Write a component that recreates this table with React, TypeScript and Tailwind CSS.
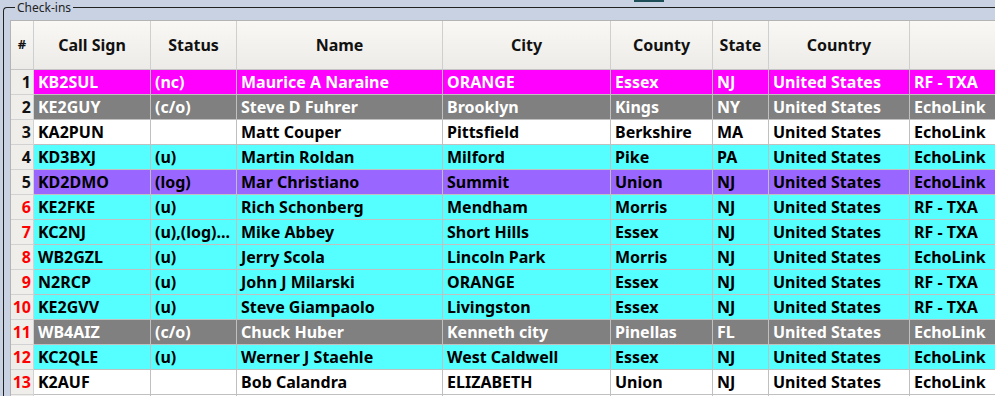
const COLS = [
  { key: "call", label: "Call Sign", w: "w-[117px]" },
  { key: "status", label: "Status", w: "w-[86px]" },
  { key: "name", label: "Name", w: "w-[206px]" },
  { key: "city", label: "City", w: "w-[168px]" },
  { key: "county", label: "County", w: "w-[102px]" },
  { key: "state", label: "State", w: "w-[56px]" },
  { key: "country", label: "Country", w: "w-[141px]" },
  { key: "mode", label: "", w: "w-[120px]" },
] as const;

type Fila = {
  call: string;
  status: string;
  name: string;
  city: string;
  county: string;
  state: string;
  country: string;
  mode: string;
  tipo: "nc" | "co" | "none" | "u" | "log";
};

const ESTILO: Record<Fila["tipo"], string> = {
  nc: "bg-[#ff00ff] text-white",
  co: "bg-[#808080] text-white",
  none: "bg-white text-black",
  u: "bg-[#55ffff] text-black",
  log: "bg-[#9966ff] text-black",
};

const FILAS: Fila[] = [
  { call: "KB2SUL", status: "(nc)", name: "Maurice A Naraine", city: "ORANGE", county: "Essex", state: "NJ", country: "United States", mode: "RF - TXA", tipo: "nc" },
  { call: "KE2GUY", status: "(c/o)", name: "Steve D Fuhrer", city: "Brooklyn", county: "Kings", state: "NY", country: "United States", mode: "EchoLink", tipo: "co" },
  { call: "KA2PUN", status: "", name: "Matt Couper", city: "Pittsfield", county: "Berkshire", state: "MA", country: "United States", mode: "EchoLink", tipo: "none" },
  { call: "KD3BXJ", status: "(u)", name: "Martin Roldan", city: "Milford", county: "Pike", state: "PA", country: "United States", mode: "EchoLink", tipo: "u" },
  { call: "KD2DMO", status: "(log)", name: "Mar Christiano", city: "Summit", county: "Union", state: "NJ", country: "United States", mode: "EchoLink", tipo: "log" },
  { call: "KE2FKE", status: "(u)", name: "Rich Schonberg", city: "Mendham", county: "Morris", state: "NJ", country: "United States", mode: "RF - TXA", tipo: "u" },
  { call: "KC2NJ", status: "(u),(log)...", name: "Mike Abbey", city: "Short Hills", county: "Essex", state: "NJ", country: "United States", mode: "RF - TXA", tipo: "u" },
  { call: "WB2GZL", status: "(u)", name: "Jerry Scola", city: "Lincoln Park", county: "Morris", state: "NJ", country: "United States", mode: "EchoLink", tipo: "u" },
  { call: "N2RCP", status: "(u)", name: "John J Milarski", city: "ORANGE", county: "Essex", state: "NJ", country: "United States", mode: "RF - TXA", tipo: "u" },
  { call: "KE2GVV", status: "(u)", name: "Steve Giampaolo", city: "Livingston", county: "Essex", state: "NJ", country: "United States", mode: "RF - TXA", tipo: "u" },
  { call: "WB4AIZ", status: "(c/o)", name: "Chuck Huber", city: "Kenneth city", county: "Pinellas", state: "FL", country: "United States", mode: "EchoLink", tipo: "co" },
  { call: "KC2QLE", status: "(u)", name: "Werner J Staehle", city: "West Caldwell", county: "Essex", state: "NJ", country: "United States", mode: "EchoLink", tipo: "u" },
  { call: "K2AUF", status: "", name: "Bob Calandra", city: "ELIZABETH", county: "Union", state: "NJ", country: "United States", mode: "EchoLink", tipo: "none" },
];

export default function App() {
  return (
    <div className="relative w-[995px] h-[396px] overflow-hidden bg-[#c9d2e3] font-['Noto_Sans',sans-serif] pt-[7px] pl-[3px]">
      <div className="absolute left-[634px] top-0 w-[30px] h-[2px] bg-[#1d4d57]" />
      <div className="relative border-t border-l border-[#222] rounded-tl-[4px] pt-[12px] pl-[6px]">
        <span className="absolute left-[11px] top-[-8px] bg-[#c9d2e3] px-[2px] text-[12px] leading-[16px] text-[#222]">
          Check-ins
        </span>
        <div className="border-l border-t border-[#b4b4b4] w-[1200px]">
          {/* encabezado */}
          <div className="flex h-[49px] border-b border-[#c4c4c4] bg-linear-to-b from-[#faf8f5] to-[#edebe7]">
            <div className="w-[23px] shrink-0 border-r border-[#cfcfcf] flex items-center justify-center text-[13px] font-bold text-[#111]">
              #
            </div>
            {COLS.map((c) => (
              <div
                key={c.key}
                className={`${c.w} shrink-0 border-r border-[#cfcfcf] flex items-center justify-center text-[16px] font-bold text-[#111]`}
              >
                {c.label}
              </div>
            ))}
          </div>
          {FILAS.map((f, i) => (
            <div key={i} className="flex h-[25px]">
              <div
                className={`w-[23px] shrink-0 border-r border-b border-[#d2d2d2] bg-[#efeeeb] flex items-center justify-end pr-[2px] text-[16px] font-bold ${
                  i >= 5 ? "text-[#ff0000]" : "text-[#111]"
                }`}
              >
                {i + 1}
              </div>
              {COLS.map((c) => (
                <div
                  key={c.key}
                  className={`${c.w} ${ESTILO[f.tipo]} shrink-0 border-r border-b border-[#c0c0c0] flex items-center px-[4px] text-[16px] font-bold whitespace-nowrap overflow-hidden`}
                >
                  {f[c.key]}
                </div>
              ))}
            </div>
          ))}
          {/* fila siguiente, apenas visible */}
          <div className="flex h-[25px]">
            <div className="w-[23px] shrink-0 border-r border-[#d2d2d2] bg-[#efeeeb]" />
            {COLS.map((c) => (
              <div key={c.key} className={`${c.w} shrink-0 border-r border-[#c0c0c0] bg-white`} />
            ))}
          </div>
        </div>
      </div>
    </div>
  );
}
